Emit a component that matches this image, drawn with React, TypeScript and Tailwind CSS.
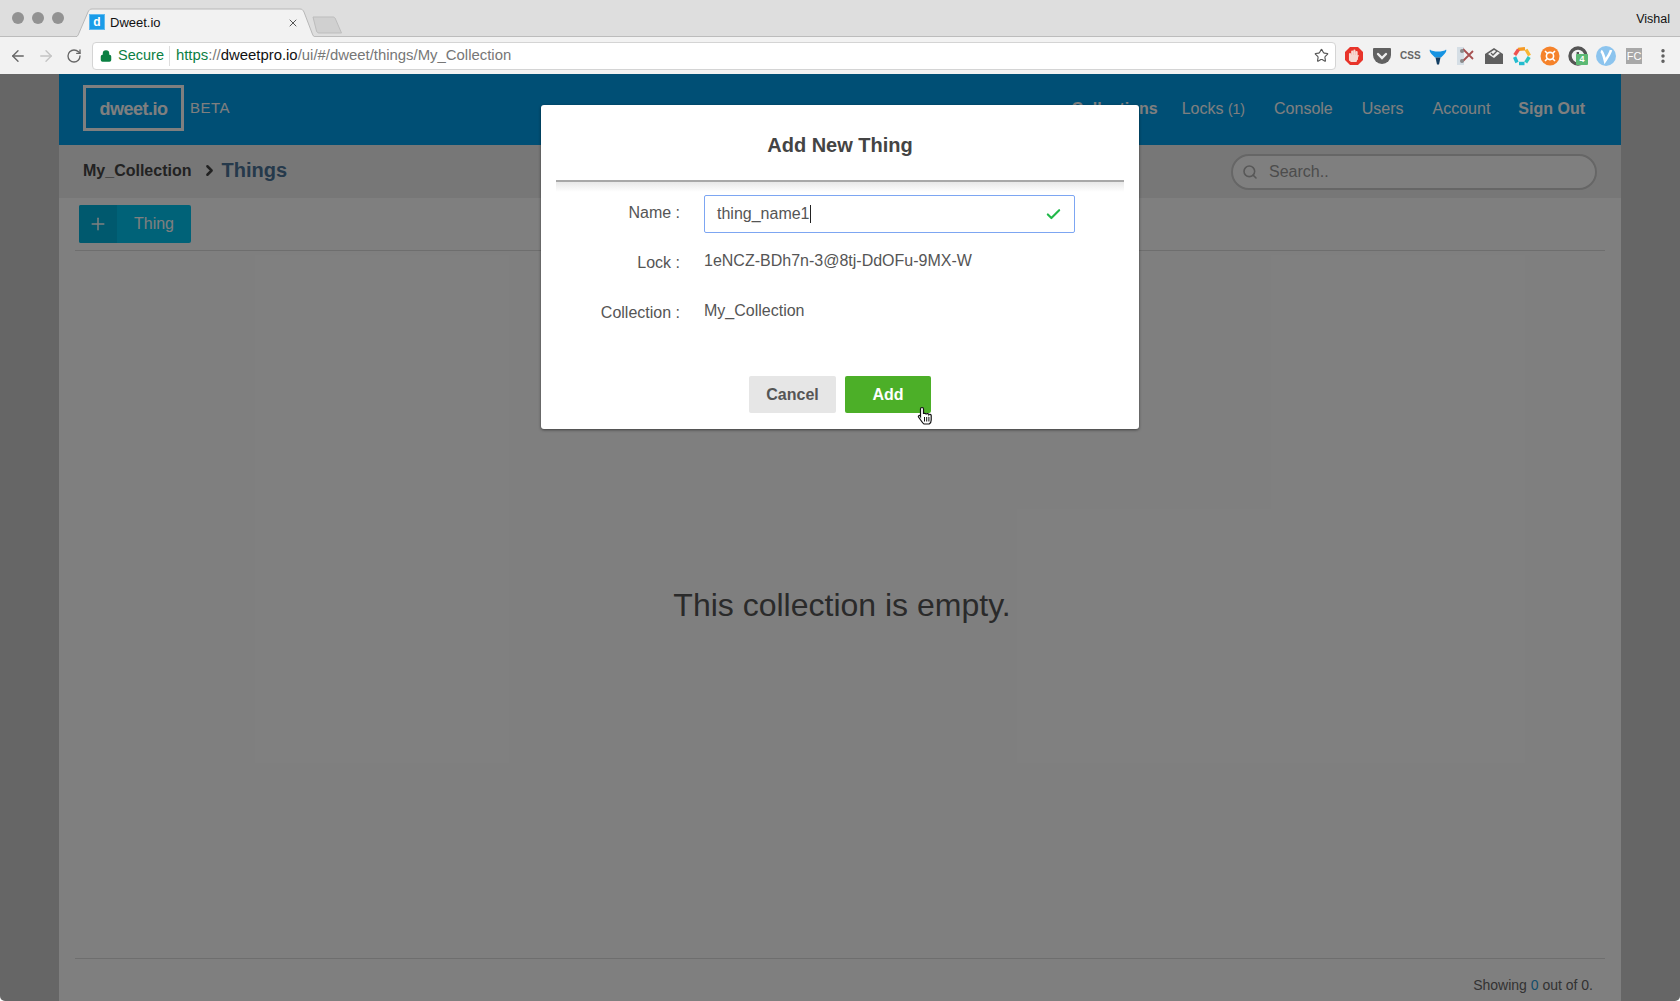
import { ArrowLeft, ArrowRight, Check, Lock, Plus, RotateCw, Search, Star, X, ChevronRight, MoreVertical } from 'lucide-react';

const sans = "font-['Liberation_Sans',Arial,sans-serif]";

function ExtensionIcons() {
  return (
    <div className="flex items-center gap-[8px] ml-[8px]">
      {/* adblock */}
      <svg width="20" height="20" viewBox="0 0 20 20">
        <path d="M6 1h8l5 5v8l-5 5H6l-5-5V6z" fill="#e8342a" />
        <path d="M6 14V8M8.200 13V5.500M10.400 13V4.500M12.600 13V6" stroke="#f6d9d2" strokeWidth="2.100" strokeLinecap="round" fill="none" />
        <path d="M5.200 10l1.300 6h6l2.500-7-1.800.5-.6 2z" fill="#f6d9d2" />
        <path d="M6 9h7.500v5H6z" fill="#f6d9d2" />
      </svg>
      {/* pocket */}
      <svg width="20" height="20" viewBox="0 0 20 20">
        <path d="M2 2h16a1 1 0 0 1 1 1v6a9 9 0 0 1-18 0V3a1 1 0 0 1 1-1z" fill="#616161" />
        <path d="M6 8l4 4 4-4" stroke="#eee" strokeWidth="2.400" fill="none" strokeLinecap="round" />
      </svg>
      {/* css */}
      <span className="w-[20px] text-center text-[10px] leading-none font-bold text-[#666]">CSS</span>
      {/* funnel */}
      <svg width="20" height="20" viewBox="0 0 20 20">
        <path d="M2 3.500c1 1.500 5 2 8 2s7-.5 8-2c1 1-.5 3.500-2.500 5.500L13 11.500H7L4.500 9C2.500 7 1 4.500 2 3.500z" fill="#1593e2" />
        <path d="M7.500 11.500h5L11 18.500H9z" fill="#123e63" />
      </svg>
      {/* scissors */}
      <svg width="20" height="20" viewBox="0 0 20 20">
        <rect x="1" y="1" width="7" height="18" fill="#d5dee5" />
        <path d="M7 3l10 10M7 15L17 5" stroke="#a65050" strokeWidth="1.800" />
        <circle cx="6" cy="5" r="2" fill="#8a8a8a" />
        <circle cx="6" cy="15" r="2" fill="#8a8a8a" />
      </svg>
      {/* mail */}
      <svg width="20" height="20" viewBox="0 0 20 20">
        <path d="M1 8l9-6 9 6v10H1z" fill="#5f5f5f" />
        <path d="M4 8l6-4 6 3-6 5z" fill="#f2f2f2" />
        <path d="M7 7l2 2 4-4" stroke="#5f5f5f" strokeWidth="1.300" fill="none" />
      </svg>
      {/* ring */}
      <svg width="20" height="20" viewBox="0 0 20 20" fill="none" strokeWidth="3.400" strokeLinecap="butt">
        <path d="M6 3.400L13 2.800" stroke="#f59a23" />
        <path d="M14 3.500l3.500 6" stroke="#f8b733" />
        <path d="M17.200 11l-3.500 5.500" stroke="#2cc5c0" />
        <path d="M12.500 17.500H7" stroke="#23bcd0" />
        <path d="M5 16.500L2.600 11" stroke="#23bcd0" />
        <path d="M2.800 9L6.500 3.500" stroke="#ef5350" />
      </svg>
      {/* orange */}
      <svg width="20" height="20" viewBox="0 0 20 20">
        <circle cx="10" cy="10" r="9.500" fill="#f5822a" />
        <circle cx="10" cy="10" r="3.600" fill="none" stroke="#fff" strokeWidth="1.600" />
        <path d="M5 5l2.500 2.500M15 5l-2.500 2.500M5 15l2.500-2.500M15 15l-2.500-2.500" stroke="#fff" strokeWidth="1.600" />
      </svg>
      {/* badge */}
      <div className="relative w-[20px] h-[20px]">
        <svg width="20" height="20" viewBox="0 0 20 20">
          <circle cx="10" cy="10" r="8" fill="none" stroke="#555" strokeWidth="3.400" />
          <rect x="8.600" y="6" width="2.400" height="9" fill="#555" />
        </svg>
        <span className="absolute left-[8px] top-[8px] w-[12px] h-[11px] bg-[#5cb974] rounded-[1px] text-white text-[9px] leading-[11px] font-bold text-center">4</span>
      </div>
      {/* v */}
      <svg width="20" height="20" viewBox="0 0 20 20">
        <circle cx="10" cy="10" r="10" fill="#8cc4ee" />
        <path d="M5 5c2 1 3 6 4 10 2-3 5-7 6-11" stroke="#fff" strokeWidth="2.600" fill="none" />
      </svg>
      {/* fc */}
      <span className="w-[16px] h-[16px] mx-[2px] bg-[#a8a8a8] text-white text-[11px] leading-[16px] text-center">FC</span>
      <MoreVertical size={18} strokeWidth={2.600} className="text-[#5a5a5a] ml-[2px]" />
    </div>
  );
}

function BrowserChrome() {
  return (
    <div className="shrink-0">
      <div className="relative h-[37px] bg-[#dedede] border-b border-[#bcbcbc] flex items-center">
        <div className="flex gap-[8px] ml-[12px] mb-[1px]">
          <span className="w-[12px] h-[12px] rounded-full bg-[#929292]" />
          <span className="w-[12px] h-[12px] rounded-full bg-[#929292]" />
          <span className="w-[12px] h-[12px] rounded-full bg-[#929292]" />
        </div>
        <div className="relative ml-[10px] w-[242px] h-[37px] shrink-0">
          <svg className="absolute inset-0" width="242" height="37" viewBox="0 0 242 37">
            <path d="M0 37c3 0 4-1 5-4L14 12c1-2 2-3 4-3h208c2 0 3 1 4 3l8 21c1 3 2 4 4 4" fill="#f2f2f2" stroke="#b8b8b8" />
          </svg>
          <div className="absolute left-[15px] top-[14px] w-[16px] h-[16px] bg-[#1a9ce8] text-white text-[12px] leading-[14px] font-bold text-center border border-[#5fbaf0]">d</div>
          <span className="absolute left-[36px] top-[14px] text-[13px] leading-[18px] text-[#111]">Dweet.io</span>
          <X size={12} strokeWidth={1.800} className="absolute left-[213px] top-[17px] text-[#444]" />
        </div>
        <svg className="ml-[-5px] mt-[13px]" width="34" height="20" viewBox="0 0 34 20">
          <path d="M2 2h20c1 0 2 .5 2.500 2l6 14H8c-1 0-2-.5-2.500-2z" fill="#d0d0d0" stroke="#bdbdbd" />
        </svg>
        <span className="ml-auto mr-[10px] mt-[3px] text-[12.500px] text-[#111]">Vishal</span>
      </div>
      <div className="h-[37px] bg-[#f2f2f2] flex items-center">
        <ArrowLeft size={18} strokeWidth={1.800} className="ml-[9px] text-[#666]" />
        <ArrowRight size={18} strokeWidth={1.800} className="ml-[10px] text-[#c4c4c4]" />
        <RotateCw size={16} strokeWidth={2} className="ml-[11px] text-[#666]" />
        <div className="ml-[10px] w-[1244px] h-[28px] bg-white border border-[#d4d4d4] rounded-[4px] flex items-center text-[14.900px]">
          <Lock size={12} strokeWidth={3} className="ml-[7px] text-[#0b8043] fill-[#0b8043]" />
          <span className="ml-[6px] text-[#0b8043] text-[14.500px]">Secure</span>
          <span className="ml-[5px] h-[20px] w-px bg-[#dedede]" />
          <span className="ml-[6px] text-[#0b8043]">https</span>
          <span className="text-[#777]">://</span>
          <span className="text-[#111]">dweetpro.io</span>
          <span className="text-[#777]">/ui/#/dweet/things/My_Collection</span>
          <Star size={15} strokeWidth={1.800} className="ml-auto mr-[6px] text-[#555]" />
        </div>
        <ExtensionIcons />
      </div>
    </div>
  );
}

function Page() {
  return (
    <div className="flex-1 min-h-0 bg-[#cdcdcd] px-[59px] flex">
      <div className="flex-1 flex flex-col bg-white min-w-0">
        <header className="h-[71px] shrink-0 bg-[#009eea] flex items-center pl-[24px] pr-[36px] text-white">
          <div className="w-[101px] h-[46px] mb-[4px] pt-[3px] border-[3px] border-white flex items-center justify-center text-[18px] font-bold tracking-[-0.500px]">dweet.io</div>
          <span className="ml-[6px] mb-[3px] text-[15px] tracking-[0.500px]">BETA</span>
          <nav className="ml-auto mb-[2px] flex items-center text-[16px]">
            <span className="font-bold">Collections</span>
            <span className="ml-[24px]">Locks <span className="text-[14px]">(1)</span></span>
            <span className="ml-[29px]">Console</span>
            <span className="ml-[29px]">Users</span>
            <span className="ml-[29px]">Account</span>
            <span className="ml-[28px] font-bold">Sign Out</span>
          </nav>
        </header>
        <div className="h-[53px] shrink-0 bg-[#eeeeee] flex items-center pl-[24px] pr-[24px]">
          <span className="mb-[2px] text-[16px] font-bold text-[#444]">My_Collection</span>
          <ChevronRight size={17} strokeWidth={3.500} className="ml-[10px] mb-[3px] text-[#444]" />
          <span className="ml-[3px] mb-[4px] text-[20px] font-bold text-[#4a7296]">Things</span>
          <div className="ml-auto w-[366px] h-[36px] rounded-full border-2 border-[#cccccc] flex items-center bg-white">
            <Search size={16} strokeWidth={2.400} className="ml-[9px] text-[#b0b0b0]" />
            <span className="ml-[11px] text-[16px] text-[#999]">Search..</span>
          </div>
        </div>
        <div className="px-[16px] pt-[7px]">
          <div className="ml-[4px] w-[112px] h-[38px] rounded-[2px] overflow-hidden flex text-white bg-[#00c4f0]">
            <span className="w-[38px] bg-[#00b2dc] flex items-center justify-center">
              <Plus size={20} strokeWidth={1.800} />
            </span>
            <span className="flex-1 flex items-center justify-center text-[16px]">Thing</span>
          </div>
          <div className="mt-[7px] h-px bg-[#dddddd]" />
        </div>
        <div className="flex-1 flex items-center justify-center pl-[4px] text-[32px] text-[#555]">This collection is empty.</div>
        <div className="mx-[16px] h-px bg-[#dddddd]" />
        <div className="h-[42px] shrink-0 flex items-center justify-end pr-[28px] pt-[11px] text-[14px] text-[#666]">
          Showing&nbsp;<span className="text-[#2a9bd8]">0</span>&nbsp;out of 0.
        </div>
      </div>
    </div>
  );
}

function AddThingModal() {
  return (
    <div className="absolute left-[541px] top-[31px] w-[598px] h-[324px] bg-white rounded-[3px] shadow-[0_1px_3px_rgba(0,0,0,0.5)] px-[15px] text-[16px] text-[#555]">
      <h2 className="h-[75px] pt-[4px] flex items-center justify-center text-[20px] font-bold text-[#444]">Add New Thing</h2>
      <div className="h-[12px] border-t-2 border-[#a8a8a8] bg-gradient-to-b from-[#e8e8e8] to-white" />
      <div className="mt-[3px] grid grid-cols-[124px_371px] gap-x-[24px] items-start">
        <span className="text-right pt-[6px] h-[51px]">Name :</span>
        <div className="h-[38px] border border-[#7da6f2] rounded-[2px] flex items-center pl-[12px] pr-[12px]">
          <span className="text-[#555]">thing_name1</span>
          <span className="w-px h-[18px] bg-[#222]" />
          <Check size={17} strokeWidth={3} className="ml-auto text-[#22b84a]" />
        </div>
        <span className="text-right pt-[5px] h-[50px]">Lock :</span>
        <span className="pt-[3px]">1eNCZ-BDh7n-3@8tj-DdOFu-9MX-W</span>
        <span className="text-right pt-[5px] h-[80px]">Collection :</span>
        <span className="pt-[3px]">My_Collection</span>
      </div>
      <div className="flex justify-center gap-[9px] relative">
        <button className="w-[87px] h-[37px] rounded-[2px] bg-[#e6e6e6] font-bold text-[#555]">Cancel</button>
        <button className="w-[86px] h-[37px] rounded-[2px] bg-[#4caf28] font-bold text-white">Add</button>
        <svg className="absolute left-[361px] top-[30px]" width="17" height="20" viewBox="0 0 17 20">
          <path d="M5 1.500c.9 0 1.500.6 1.500 1.500V8c0-.9 2.600-.9 2.800.3.200-.9 2.400-.8 2.600.4.300-.7 2.200-.6 2.300.8V14c0 2-1 3.500-2 4H7c-1-.5-2-2-3-3.500L1.500 11c-.6-1 .8-2 1.600-1.200l.4.700V3c0-.9.600-1.500 1.500-1.500z" fill="#fff" stroke="#111" strokeWidth="1.200" />
          <path d="M7.500 11v4.500M9.700 11v4.500M11.900 11v4.500" stroke="#111" strokeWidth="1" />
        </svg>
      </div>
    </div>
  );
}

export default function App() {
  return (
    <div className={`${sans} w-full h-screen flex flex-col overflow-hidden bg-white`}>
      <BrowserChrome />
      <div className="relative flex-1 min-h-0 flex rounded-b-[5px] overflow-hidden">
        <Page />
        <div className="absolute inset-0 bg-black/50" />
        <AddThingModal />
      </div>
    </div>
  );
}
